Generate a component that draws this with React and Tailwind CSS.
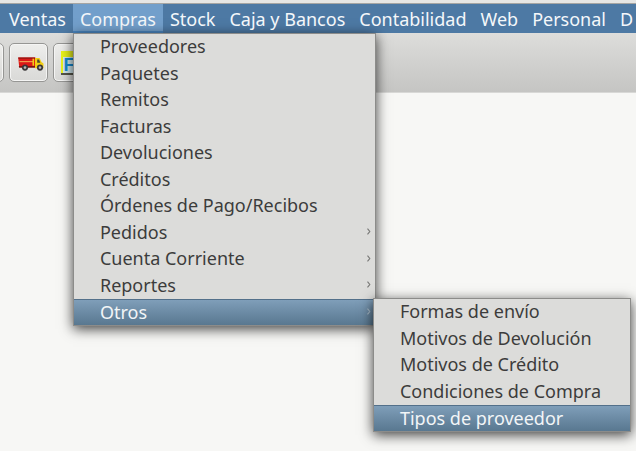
import { useState } from "react";
import clsx from "clsx";

const sections = ["Ventas", "Compras", "Stock", "Caja y Bancos", "Contabilidad", "Web", "Personal", "D"];

const otros = [
    { label: "Formas de envío" },
    { label: "Motivos de Devolución" },
    { label: "Motivos de Crédito" },
    { label: "Condiciones de Compra" },
    { label: "Tipos de proveedor" },
];

const compras = [
    { label: "Proveedores" },
    { label: "Paquetes" },
    { label: "Remitos" },
    { label: "Facturas" },
    { label: "Devoluciones" },
    { label: "Créditos" },
    { label: "Órdenes de Pago/Recibos" },
    { label: "Pedidos", more: true },
    { label: "Cuenta Corriente", more: true },
    { label: "Reportes", more: true },
    { label: "Otros", more: true, children: otros },
];

const Arrow = () => (
    <svg className="h-[7px] w-1 shrink-0" viewBox="0 0 4 7" fill="none" stroke="currentColor" aria-hidden="true">
        <path d="M0.5 0.7 L2.8 3.5 L0.5 6.3" strokeWidth="1.1" />
    </svg>
);

const Truck = () => (
    <svg className="mt-0.5 ml-1 h-[18px] w-[26px]" viewBox="0 0 26 18" aria-hidden="true">
        <path d="M0.2 2.5h17v9.5H1.2z" fill="#dc1717" />
        <path d="M0.2 2.5h17v1.2H0.4z" fill="#8f1712" />
        <path d="M1.5 6h14v1.2h-14z" fill="#ef9a4c" />
        <path d="M14.5 3.7h1.6v7h-1.6z" fill="#f3ce13" />
        <path d="M0.8 11h17v1.8H1.2z" fill="#7b1510" />
        <path d="M17 3h4.5l2 4 2 1.6v4.6H17z" fill="#f3ce13" />
        <path d="M19.2 4.5h1.8l1.4 3.2h-3.2z" fill="#4b4a31" />
        <circle cx="7" cy="12.6" r="3.1" fill="#3b3738" />
        <circle cx="7" cy="12.6" r="1.3" fill="#b5b5b5" />
        <circle cx="22" cy="12.6" r="3.1" fill="#3b3738" />
        <circle cx="22" cy="12.6" r="1.3" fill="#b5b5b5" />
    </svg>
);

const ToolButton = ({ label, children }) => (
    <button
        aria-label={label}
        className="flex h-[39px] w-[39px] shrink-0 items-center justify-center rounded-[5px] border border-[#969694] bg-linear-to-b from-[#eeeeec] to-[#d9d9d7] shadow-[inset_0_0_0_1px_#f5f5f4]"
    >
        {children}
    </button>
);

const Menu = ({ items, name, active, onSelect, className }) => (
    <ul
        role="menu"
        aria-label={name}
        className={clsx(
            "absolute border border-[#8c8c8a] bg-[#dcdcda] text-[#3c3c3c] shadow-[0_3px_12px_rgba(0,0,0,0.75)]",
            className
        )}
    >
        {items.map((item) => (
            <li key={item.label} role="none" className="relative flex h-[26px] even:h-[27px]">
                <button
                    role="menuitem"
                    aria-haspopup={item.more ? "menu" : undefined}
                    onClick={() => onSelect && onSelect(item.label)}
                    className={clsx(
                        "flex w-full items-center justify-between pr-1 pb-0.5 pl-[26px] text-left whitespace-nowrap",
                        active === item.label &&
                            "border-t border-[#53708a] bg-linear-to-b from-[#7f9eb9] to-[#597890] text-[#f2f5f7]"
                    )}
                >
                    {item.label}
                    {item.more && (
                        <span className={active === item.label ? "text-[#a9bccb]" : "text-[#777775]"}>
                            <Arrow />
                        </span>
                    )}
                </button>
                {item.children && active === item.label && (
                    <Menu
                        items={item.children}
                        name={item.label}
                        active="Tipos de proveedor"
                        className="-top-px left-full -ml-[2px] w-[258px]"
                    />
                )}
            </li>
        ))}
    </ul>
);

const App = () => {
    const [open, setOpen] = useState("Compras");
    const [active, setActive] = useState("Otros");

    return (
        <div className="min-h-screen overflow-hidden bg-[#f7f7f5] font-['Noto_Sans','Open_Sans',sans-serif] text-[18px] leading-6">
            <div className="h-1 border-b border-[#a5a5a3] bg-[#e6e6e4]" />
            <nav className="relative z-10 flex h-[29px] bg-[#4d79a4] pl-0.5 text-[#f4f7fa]">
                {sections.map((section) => (
                    <div key={section} className="relative flex shrink-0">
                        <button
                            aria-haspopup="menu"
                            onClick={() => setOpen(open === section ? "" : section)}
                            className={clsx(
                                "px-[7px] whitespace-nowrap",
                                open === section && "bg-[#729fcb] shadow-[inset_0_-2px_0_#4a86c0]"
                            )}
                        >
                            {section}
                        </button>
                        {section === "Compras" && open === section && (
                            <Menu
                                items={compras}
                                name={section}
                                active={active}
                                onSelect={setActive}
                                className="top-full left-0 w-[303px]"
                            />
                        )}
                    </div>
                ))}
            </nav>
            <div className="flex h-[60px] items-center border-b border-[#d8d8d6] bg-linear-to-b from-[#dddddb] to-[#c5c5c3]">
                <div className="-ml-[35px] flex gap-[5px]">
                    <ToolButton label="Inicio" />
                    <ToolButton label="Remitos">
                        <Truck />
                    </ToolButton>
                    <ToolButton label="Facturas">
                        <span className="flex h-6 w-6 items-end border-b-2 border-[#55564a] bg-[#e9f21c] pl-0.5">
                            <span className="bg-[#d3e9f0] pl-px font-['Liberation_Sans',sans-serif] text-lg leading-4 font-bold text-[#168bd2]">
                                F
                            </span>
                        </span>
                    </ToolButton>
                </div>
            </div>
        </div>
    );
};

export default App;
